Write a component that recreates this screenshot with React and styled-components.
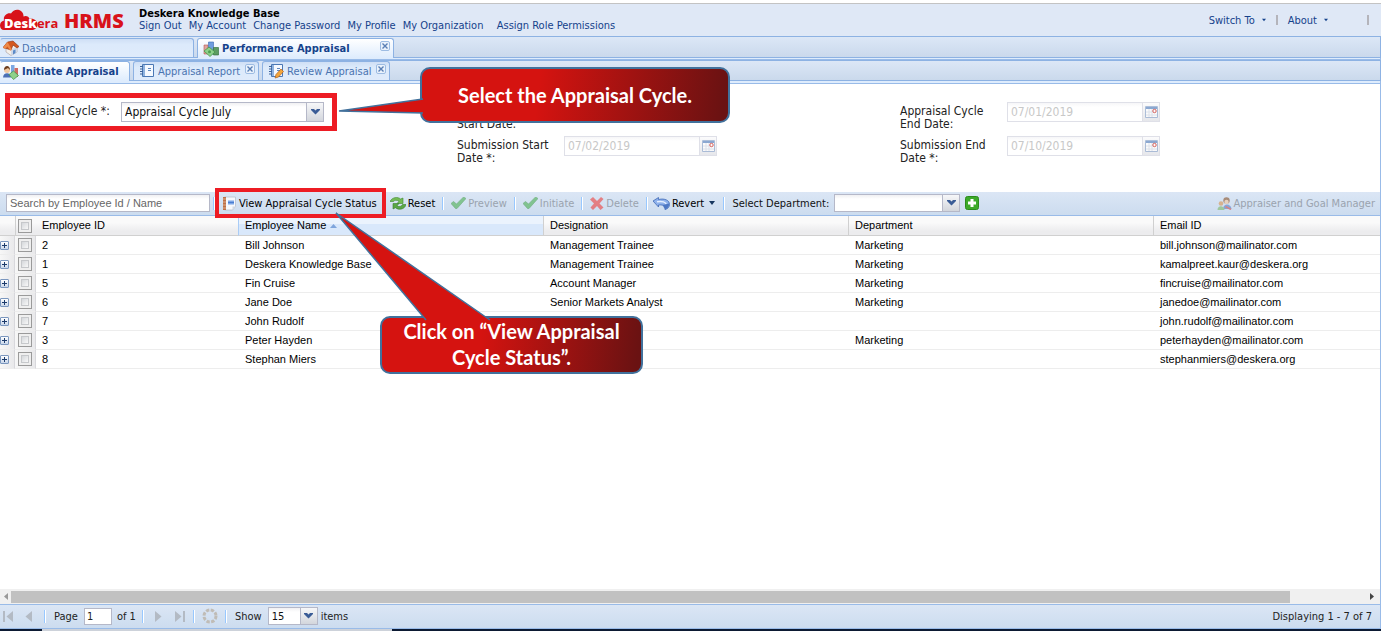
import React from "react";
import styled, { createGlobalStyle, css } from "styled-components";

const ui = `"DejaVu Sans Condensed", "DejaVu Sans", sans-serif`;
const arial = `"Liberation Sans", sans-serif`;

const GlobalStyle = createGlobalStyle`
  *, *::before, *::after { box-sizing: border-box; }
  body { margin: 0; background: #fff; font: 11px/13px ${ui}; color: #222; }
  button, input, select { font: inherit; color: inherit; margin: 0; }
  button { border: 0; background: none; padding: 0; cursor: pointer; white-space: nowrap; }
  button:disabled { cursor: default; }
  a { color: inherit; text-decoration: none; }
  svg { display: block; flex: none; }
`;

const Page = styled.div`
  position: relative;
  display: flex;
  flex-direction: column;
  min-height: 100vh;
  overflow: hidden;
`;

/* ---------- header ---------- */
const Header = styled.header`
  display: flex;
  align-items: center;
  height: 33px;
  margin-top: 3px;
  padding-right: 12px;
  border-top: 1px solid #c3c3c3;
  background: #dfe8f6;
  color: #15428b;
`;
const Logo = styled.a`
  position: relative;
  display: flex;
  align-items: center;
  width: 139px;
  height: 30px;
  color: #d8121a;
  font: 700 13px/20px "Open Sans", sans-serif;
`;
const LogoCloud = styled.svg`
  position: absolute;
  left: 0;
  top: 4px;
`;
const Brand = styled.span`
  position: relative;
  width: 59px;
  padding: 6px 0 0 4px;
  b { color: #fff; }
`;
const Product = styled.span`
  position: relative;
  padding: 2px 0 0 5px;
  font-size: 20px;
  font-weight: 800;
`;
const Account = styled.div`
  flex: 1;
  strong { display: block; color: #000; line-height: 12px; }
`;
const AccountLinks = styled.nav`
  display: flex;
  gap: 7px;
  line-height: 12px;
`;
const HeaderMenu = styled.div`
  display: flex;
  align-items: center;
  gap: 10px;
`;
const MenuButton = styled.button`
  display: flex;
  align-items: center;
  gap: 7px;
`;
const Bar = styled.i`
  width: 2px;
  height: 10px;
  background: #b4b4bb;
  margin-left: ${(p) => (p.$far ? 29 : 0)}px;
`;

/* ---------- tabs ---------- */
const TabStrip = styled.nav`
  display: flex;
  align-items: flex-end;
  gap: 3px;
  height: ${(p) => (p.$inner ? 21 : 22)}px;
  border: solid #8db2e3;
  border-width: 1px 1px 1px 0;
  background: linear-gradient(#dce7f6, #cad9ec);
`;
const StripBase = styled.div`
  height: ${(p) => p.$h}px;
  border: solid #99bbe8;
  border-width: 0 1px 1px 0;
  background: #deecfd;
`;
const Tab = styled.div`
  display: flex;
  align-items: center;
  gap: 3px;
  width: ${(p) => p.$w}px;
  height: ${(p) => (p.$active ? 20 : 19)}px;
  margin-bottom: ${(p) => (p.$active ? -1 : 0)}px;
  padding: 0 3px 0 ${(p) => p.$pad || 2}px;
  border: 1px solid #8db2e3;
  border-bottom: 0;
  border-left-color: ${(p) => (p.$first ? "transparent" : "#8db2e3")};
  border-radius: 3px 3px 0 0;
  background: ${(p) =>
    p.$active ? "linear-gradient(#fff, #deecfd)" : "linear-gradient(#cfdff5, #dceafb 30%, #dfebfb)"};
  color: ${(p) => (p.$active ? "#15428b" : "#4a73b0")};
  font-weight: ${(p) => (p.$active ? 700 : 400)};
`;
const TabLink = styled.a`
  flex: 1;
  white-space: nowrap;
`;
const CloseButton = styled.button`
  align-self: flex-start;
  margin-top: 2px;
  display: grid;
  place-items: center;
  width: 10px;
  height: 10px;
  border: 1px solid #9dbce3;
  border-radius: 2px;
  background: #eaf2fc;
`;

/* ---------- form ---------- */
const Form = styled.form`
  display: grid;
  grid-template-columns: repeat(3, 1fr);
  gap: 5px 0;
  padding: 18px 37px 17px 14px;
  height: 108px;
  align-content: start;
  border-right: 1px solid #99bbe8;
  font-size: 12px;
`;
const Field = styled.div`
  position: relative;
  display: flex;
  align-items: flex-start;
  justify-self: start;
  height: 29px;
  grid-column: ${(p) => p.$col};
`;
const FieldLabel = styled.label`
  width: 107px;
  padding: ${(p) => (p.$second ? 16 : 3)}px 8px 0 0;
`;
const Highlight = styled.i`
  position: absolute;
  inset: ${(p) => p.$inset};
  border: ${(p) => p.$b}px solid #ed1c24;
  pointer-events: none;
  z-index: 2;
`;
const Control = styled.div`
  display: flex;
  width: ${(p) => p.$w}px;
  height: ${(p) => p.$h || 20}px;
  border: 1px solid ${(p) => (p.$off ? "#dfe0e8" : "#b5b8c8")};
  background: ${(p) => (p.$off ? "linear-gradient(#f6f6f8, #fff 4px)" : "linear-gradient(#f0f0f2, #fff 4px)")};
`;
const TextInput = styled.input`
  flex: 1;
  min-width: 0;
  border: 0;
  padding: 0 3px;
  background: none;
  outline: 0;
  &:disabled { color: #c8c8c8; }
`;
const Select = styled.select`
  flex: 1;
  min-width: 0;
  padding: 0 3px;
  border: 0;
  appearance: none;
  background: none;
  outline: 0;
  color: #111;
`;
const Trigger = styled.button`
  display: grid;
  place-items: center;
  width: 17px;
  border-left: 1px solid #b5b8c8;
  background: linear-gradient(#f6f7f9, #d3d6dc);
  &:disabled {
    border-color: #dfe0e8;
    background: linear-gradient(#fbfbfc, #e6e7eb);
  }
  &:disabled svg { opacity: 0.7; }
`;

/* ---------- toolbar ---------- */
const Toolbar = styled.div`
  display: flex;
  align-items: center;
  height: 24px;
  padding: 0 5px 1px 6px;
  border: solid #99bbe8;
  border-width: 0 1px 1px 0;
  background: linear-gradient(#dbe6f5, #ccdcef);
  color: #111;
`;
const ToolButton = styled.button`
  position: relative;
  display: flex;
  align-items: center;
  gap: 2px;
  margin-left: ${(p) => p.$gap || 7}px;
  color: ${(p) => (p.disabled ? "#9aa3ae" : "#000")};
  svg { opacity: ${(p) => (p.disabled ? 0.6 : 1)}; }
`;
const Separator = styled.i`
  width: 2px;
  height: 13px;
  margin-left: ${(p) => p.$gap || 7}px;
  border-left: 1px solid #98c8ff;
  border-right: 1px solid #fff;
`;
const SearchInput = styled.input`
  width: 204px;
  height: 18px;
  padding: 0 3px;
  border: 1px solid #b5b8c8;
  background: linear-gradient(#f0f0f2, #fff 4px);
  font-family: ${arial};
  &::placeholder { color: #666; opacity: 1; }
`;
const ToolLabel = styled.label`
  margin: 0 5px 0 7px;
`;
const Spacer = styled.span`
  flex: 1;
`;

/* ---------- grid ---------- */
const GridBody = styled.main`
  flex: 1;
  border-right: 1px solid #99bbe8;
`;
const Table = styled.table`
  width: 100%;
  table-layout: fixed;
  border-collapse: separate;
  border-spacing: 0;
  font: 11px/13px ${arial};
  color: #000;
`;
const Th = styled.th`
  height: 20px;
  padding: 0 0 0 ${(p) => (p.$tight ? 2 : 6)}px;
  text-align: left;
  font-weight: 400;
  border-bottom: 1px solid #d0d0d0;
  border-left: ${(p) => (p.$first ? 0 : 1)}px solid ${(p) => (p.$sorted ? "#aaccf6" : "#d0d0d0")};
  background: ${(p) =>
    p.$sorted
      ? "linear-gradient(#ebf3fd 40%, #d9e8fb 42%)"
      : "linear-gradient(#fafafa 35%, #ececee 80%)"};
`;
const SortLabel = styled.span`
  display: flex;
  align-items: center;
  gap: 4px;
`;
const Td = styled.td`
  height: 19px;
  padding: 0 0 0 ${(p) => (p.$lead ? 6 : 7)}px;
  border-bottom: 1px solid #ededed;
  ${(p) =>
    p.$tool &&
    css`
      padding-left: ${p.$tool === "x" ? 0 : 3}px;
      border-right: 1px solid #d8d8dc;
      background: linear-gradient(90deg, #f7f7f7, #e9e9eb);
    `}
`;
const Check = styled.input`
  display: block;
  appearance: none;
  width: 14px;
  height: 14px;
  margin: 0;
  border: 1px solid #9a9a9a;
  background: linear-gradient(135deg, #c4c8cd, #fbfbfb 80%);
  box-shadow: inset 0 0 0 2px #efefef, inset 0 0 0 3px #c6c8cb;
`;
const Expander = styled.button`
  display: grid;
  place-items: center;
  width: 9px;
  height: 9px;
  border: 1px solid #7b97bf;
  border-radius: 1px;
  background: linear-gradient(#fff, #c8d6ea);
`;

const ScrollBar = styled.div`
  display: flex;
  align-items: center;
  height: 15px;
  border-right: 1px solid #99bbe8;
  background: #f0f0f0;
`;
const ScrollArrow = styled.button`
  display: grid;
  place-items: center;
  width: 11px;
  height: 13px;
  margin-right: ${(p) => p.$end || 0}px;
`;
const ScrollTrack = styled.div`
  flex: 1;
  padding-right: 76px;
  i { display: block; height: 12px; background: #c1c1c1; }
`;

const Paging = styled.footer`
  display: flex;
  align-items: center;
  height: 25px;
  padding: 0 8px 1px 3px;
  border: solid #99bbe8;
  border-width: 1px 1px 1px 0;
  background: linear-gradient(#dbe6f5, #ccdcef);
  color: #222;
`;
const PageButton = styled.button`
  width: ${(p) => p.$w || 10}px;
  margin-left: ${(p) => p.$gap || 0}px;
`;
const PageText = styled.label`
  margin: 0 ${(p) => (p.$r === undefined ? 6 : p.$r)}px 0 ${(p) => p.$l || 0}px;
`;
const PageInput = styled.input`
  width: 28px;
  height: 17px;
  padding: 0 2px;
  border: 1px solid #b5b8c8;
  background: #fff;
`;
const Taskbar = styled.div`
  display: flex;
  height: 2px;
  background: #0c1a33;
  i { width: 350px; margin-left: 42px; background: #cdd2da; }
`;

/* ---------- callouts ---------- */
const Callout = styled.aside`
  position: absolute;
  z-index: 5;
  left: ${(p) => p.$x}px;
  top: ${(p) => p.$y}px;
  width: ${(p) => p.$w}px;
  height: ${(p) => p.$h}px;
  display: flex;
  align-items: center;
  justify-content: center;
  padding-bottom: 1px;
  border: 2px solid #41719c;
  border-radius: 10px;
  background: linear-gradient(97deg, #d51310 38%, #6a1212 98%);
  color: #fff;
  font: 700 20px/26px Lato, "Open Sans", sans-serif;
  text-align: center;
  white-space: nowrap;
`;
const Tail = styled.svg`
  position: absolute;
  left: ${(p) => p.$x}px;
  top: ${(p) => p.$y}px;
`;

/* ---------- icons ---------- */
const Chevron = () => (
  <svg width="9" height="6" viewBox="0 0 9 6"><path d="M0 0h3l1.5 1.600L6 0h3v1L4.500 5.400 0 1z" fill="#3a5c96" /></svg>
);
const Caret = ({ w = 6, color = "#15428b" }) => (
  <svg width={w} height="4" viewBox="0 0 6 4"><path d="M0 0h6L3 4z" fill={color} /></svg>
);
const CalendarIcon = () => (
  <svg width="13" height="12" viewBox="0 0 13 12">
    <path d="M.5.5h12v11H.5z" fill="#fff" stroke="#8fa8cc" />
    <path d="M1 1h11v2H1z" fill="#5f88c2" />
    <path d="M4 3v8M7 3v8M1 6h8M1 9h11" stroke="#d5dce8" />
    <circle cx="9.500" cy="5" r="1.700" fill="#fff" stroke="#c8201a" />
  </svg>
);
const HomeIcon = () => (
  <svg width="16" height="16" viewBox="0 0 16 16">
    <path d="M3 8l5-4 6 3v5l-6 3.500L3 12z" fill="#f4f0ea" stroke="#a99" strokeWidth=".6" />
    <path d="M8 9.500l6-2.500v5l-6 3.500z" fill="#cfd9e8" />
    <path d="M0 7.500L4.500 2 10 1l6 5.500-2 1.500-4-3-2 5z" fill="#d4591f" stroke="#8d3210" strokeWidth=".6" />
    <path d="M0 7.500L4.500 2l4.500 8-2 .5-2.500-4L2 9z" fill="#ee8a48" />
    <path d="M10 10.500l2.500-1V13L10 14.500z" fill="#5b8bc9" />
  </svg>
);
const ChartIcon = () => (
  <svg width="16" height="16" viewBox="0 0 16 16">
    <path d="M1 4h4v9H1z" fill="#e0a39e" stroke="#b25850" strokeWidth=".6" />
    <path d="M5.500 1h5v12h-5z" fill="#6f9de0" stroke="#3b68b1" strokeWidth=".6" />
    <path d="M10.500 6.500h5v7.500h-5z" fill="#5d9c63" stroke="#2d6a35" strokeWidth=".6" />
    <path d="M1 10l5-4 6 5-5 4.500z" fill="#8ed18b" stroke="#3d9142" strokeWidth=".7" />
    <circle cx="6.500" cy="10.700" r="1.500" fill="#4da052" />
  </svg>
);
const AppraisalIcon = () => (
  <svg width="16" height="16" viewBox="0 0 16 16">
    <path d="M8 1h3.500v10H8z" fill="#7ba7e2" /><path d="M11.500 4H15v9h-3.500z" fill="#ce6a62" />
    <circle cx="4" cy="6" r="3" fill="#f1c69d" /><path d="M1 6c0-5 6-5.500 6 0L5 4z" fill="#6b3d1e" />
    <path d="M0 13.500c0-5 7.500-6 8 0z" fill="#4c70b5" />
    <path d="M6 10.500L10.500 7l5 4.500-5 4z" fill="#8ed18b" stroke="#3d9142" strokeWidth=".7" />
  </svg>
);
const NotebookIcon = ({ pencil }) => (
  <svg width="16" height="16" viewBox="0 0 16 16">
    <path d="M3.500 1.500h11v12h-11z" fill="#f5f9ff" stroke="#4b78b5" />
    <path d="M4 2h2v11H4z" fill="#8eb2df" />
    <path d="M1 3.500h3M1 6h3M1 8.500h3M1 11h3" stroke="#3d6299" />
    <path d="M9 5.500h3M9 7.500h3" stroke="#5d86bd" />
    {pencil && <path d="M7 15l1-3.500L13 6l2.500 2.500-5 5.500z" fill="#f3a63b" stroke="#b2601d" strokeWidth=".7" />}
  </svg>
);
const StatusIcon = () => (
  <svg width="15" height="15" viewBox="0 0 15 15">
    <path d="M2.500 1h11v9.500l-3 3.500h-8z" fill="#f6f8fc" stroke="#b8bfcb" strokeWidth=".8" />
    <path d="M1 1h3v13H1z" fill="#bd7048" /><path d="M1 3h3M1 6h3M1 9h3M1 12h3" stroke="#ecc7aa" strokeWidth=".7" />
    <path d="M6 4.500h6v4H6z" fill="#7ba5e6" /><path d="M6 6.500h6" stroke="#4a7dd0" />
    <path d="M13.500 10.500l-3 3.500v-3.500z" fill="#d2d7df" />
  </svg>
);
const ResetIcon = () => (
  <svg width="16" height="13" viewBox="0 0 16 13">
    <path d="M0 4.500C2 0 8-.5 10.500 2L13 1v5.500H7L9 4.300C7 2.800 4.500 3 3.500 4.500z" fill="#74bb55" stroke="#3e8a31" strokeWidth=".6" />
    <path d="M16 7.500C15 12.500 8.500 13.500 5.500 10.700L3 12V6.500h6L7 8.800c2 1.500 4.500.7 5.500-1.300z" fill="#5aa745" stroke="#37802d" strokeWidth=".6" />
  </svg>
);
const TickIcon = () => (
  <svg width="15" height="12" viewBox="0 0 15 12">
    <path d="M0 6.500L2.500 4.500 5.500 7 12.500 0 15 1.500 6 11.500H4.500z" fill="#4cb050" stroke="#2f8b36" strokeWidth=".6" />
  </svg>
);
const CrossIcon = () => (
  <svg width="14" height="13" viewBox="0 0 14 13">
    <path d="M0 2.500L3 0l4 4 4-4 2.500 2-4 4.500 4 4-3 2.500L7 9l-4 4-2.500-2.500 3.500-4z" fill="#ee3f3b" />
  </svg>
);
const RevertIcon = () => (
  <svg width="17" height="13" viewBox="0 0 17 13">
    <path d="M0 4L5.500.5v2C12 1 16.500 3.500 16.500 7.500c0 2.500-2 4.500-4.500 5 1.500-3-.5-5-6.500-4.500V10z" fill="#8fb2ec" stroke="#3f68b5" strokeWidth=".8" />
    <path d="M4 4.800C9 3.800 13 5 13.500 8" stroke="#e5efff" strokeWidth="1.500" fill="none" />
    <path d="M9.500 8l6.500-1.500c.5 2.500-1 5-4 6z" fill="#4e78c4" />
  </svg>
);
const PlusIcon = () => (
  <svg width="14" height="14" viewBox="0 0 14 14">
    <rect x=".5" y=".5" width="13" height="13" rx="2" fill="#3daa2a" stroke="#2b8c1c" />
    <path d="M5.500 3h3v2.500H11v3H8.500V11h-3V8.500H3v-3h2.500z" fill="#fff" />
  </svg>
);
const PeopleIcon = () => (
  <svg width="15" height="13" viewBox="0 0 15 13">
    <circle cx="9.500" cy="3.500" r="3.200" fill="#8a5228" /><circle cx="9.500" cy="5" r="2.200" fill="#f2c79c" />
    <path d="M6 12c0-6 8-6 8.500 0z" fill="#5680c4" />
    <circle cx="4" cy="6.500" r="2.300" fill="#d9944e" /><path d="M.5 13c0-5 6.500-5 7 0z" fill="#7fb868" />
    <path d="M8.500 9.500l5.500 3" stroke="#d7493f" strokeWidth="1.500" />
  </svg>
);
const PagerArrow = ({ bar, flip }) => (
  <svg width="10" height="11" viewBox="0 0 10 11">
    <g transform={flip ? "translate(10 0) scale(-1 1)" : undefined} fill="#b3bac4">
      {bar && <path d="M0 0h2v11H0z" />}
      <path d={bar ? "M10 0v11L3.500 5.500z" : "M8 0v11L1.500 5.500z"} />
    </g>
  </svg>
);
const RefreshIcon = () => (
  <svg width="16" height="16" viewBox="0 0 16 16">
    <circle cx="8" cy="8" r="6" fill="none" stroke="#c0bcb6" strokeWidth="3" strokeDasharray="3.300 1.412" />
  </svg>
);

const Close = ({ label }) => (
  <CloseButton aria-label={`Close ${label}`}>
    <svg width="6" height="6" viewBox="0 0 6 6"><path d="M.5.5l5 5M5.500.5l-5 5" stroke="#5a7fb5" strokeWidth="1.400" /></svg>
  </CloseButton>
);

const DateField = ({ id, label, value, col, second }) => (
  <Field $col={col}>
    <FieldLabel htmlFor={id} $second={second}>{label}</FieldLabel>
    <Control $w={153} $off>
      <TextInput id={id} defaultValue={value} disabled />
      <Trigger type="button" aria-label="Pick a date" disabled><CalendarIcon /></Trigger>
    </Control>
  </Field>
);

const employees = [
  ["2", "Bill Johnson", "Management Trainee", "Marketing", "bill.johnson@mailinator.com"],
  ["1", "Deskera Knowledge Base", "Management Trainee", "Marketing", "kamalpreet.kaur@deskera.org"],
  ["5", "Fin Cruise", "Account Manager", "Marketing", "fincruise@mailinator.com"],
  ["6", "Jane Doe", "Senior Markets Analyst", "Marketing", "janedoe@mailinator.com"],
  ["7", "John Rudolf", "", "", "john.rudolf@mailinator.com"],
  ["3", "Peter Hayden", "", "Marketing", "peterhayden@mailinator.com"],
  ["8", "Stephan Miers", "", "", "stephanmiers@deskera.org"],
];

export default function App() {
  return (
    <Page>
      <GlobalStyle />
      <Header>
        <Logo href="#">
          <LogoCloud width="38" height="22" viewBox="0 0 38 22">
            <path d="M4 21C1.500 21 0 19 0 16.500S1.500 12 4 11.500C3 7 7 3.500 11 4.500 13 .5 18-.5 21 2c2 1.500 2.500 3.500 2.500 5.500C26 6 29 7.500 29.500 10 34 9 37.500 12 37.500 15.500c0 3.500-3 5.500-6 5.500z" fill="#d8121a" />
          </LogoCloud>
          <Brand><b>Desk</b>era</Brand>
          <Product>HRMS</Product>
        </Logo>
        <Account>
          <strong>Deskera Knowledge Base</strong>
          <AccountLinks>
            <a href="#">Sign Out</a><a href="#">My Account</a><a href="#">Change Password</a>
            <a href="#">My Profile</a><a href="#">My Organization</a>
            <a href="#">&nbsp;&nbsp;Assign Role Permissions</a>
          </AccountLinks>
        </Account>
        <HeaderMenu>
          <MenuButton>Switch To <Caret w={4} /></MenuButton>
          <Bar />
          <MenuButton>About <Caret w={4} /></MenuButton>
          <Bar $far />
        </HeaderMenu>
      </Header>

      <TabStrip>
        <Tab $w={194} $first><HomeIcon /><TabLink href="#">Dashboard</TabLink></Tab>
        <Tab $w={197} $active $pad={5}><ChartIcon /><TabLink href="#">Performance Appraisal</TabLink><Close label="Performance Appraisal" /></Tab>
      </TabStrip>
      <StripBase $h={2} />
      <TabStrip $inner>
        <Tab $w={130} $active $first><AppraisalIcon /><TabLink href="#">Initiate Appraisal</TabLink></Tab>
        <Tab $w={126} $pad={5}><NotebookIcon /><TabLink href="#">Appraisal Report</TabLink><Close label="Appraisal Report" /></Tab>
        <Tab $w={128} $pad={5}><NotebookIcon pencil /><TabLink href="#">Review Appraisal</TabLink><Close label="Review Appraisal" /></Tab>
      </TabStrip>
      <StripBase $h={3} />

      <Form>
        <Field $col={1}>
          <FieldLabel htmlFor="cycle">Appraisal Cycle *:</FieldLabel>
          <Control $w={203}>
            <Select id="cycle"><option>Appraisal Cycle July</option></Select>
            <Trigger type="button" aria-label="Open appraisal cycles"><Chevron /></Trigger>
          </Control>
          <Highlight $inset="-9px -13px 0 -9px" $b={5} />
          <Callout $x={406} $y={-35} $w={310} $h={56}>
            <Tail $x={-84} $y={29} width="86" height="16" viewBox="0 0 86 16">
              <path d="M85 1L1 13l84 2" fill="#d51310" stroke="#41719c" strokeWidth="1.500" />
            </Tail>
            Select the Appraisal Cycle.
          </Callout>
        </Field>
        <DateField col={2} id="cs" label="Start Date:" value="" second />
        <DateField col={3} id="ce" label="Appraisal Cycle End Date:" value="07/01/2019" />
        <DateField col={2} id="ss" label="Submission Start Date *:" value="07/02/2019" />
        <DateField col={3} id="se" label="Submission End Date *:" value="07/10/2019" />
      </Form>

      <Toolbar>
        <SearchInput aria-label="Search employees" placeholder="Search by Employee Id / Name" />
        <Separator $gap={3} />
        <ToolButton>
          <StatusIcon />View Appraisal Cycle Status
          <Highlight $inset="-8px -9px -7px -7px" $b={4} />
          <Callout $x={158} $y={120} $w={263} $h={58}>
            <Tail $x={-48} $y={-107} width="158" height="110" viewBox="0 0 158 110">
              <path d="M92 109L2 2l154 107" fill="#d51310" stroke="#41719c" strokeWidth="1.500" />
            </Tail>
            Click on “View Appraisal<br />Cycle Status”.
          </Callout>
        </ToolButton>
        <ToolButton $gap={13}><ResetIcon />Reset</ToolButton>
        <Separator />
        <ToolButton disabled><TickIcon />Preview</ToolButton>
        <Separator />
        <ToolButton disabled><TickIcon />Initiate</ToolButton>
        <Separator />
        <ToolButton disabled><CrossIcon />Delete</ToolButton>
        <Separator />
        <ToolButton $gap={5}><RevertIcon />Revert&nbsp;<Caret color="#16365f" /></ToolButton>
        <Separator $gap={8} />
        <ToolLabel htmlFor="dept">Select Department:</ToolLabel>
        <Control $w={126} $h={18}>
          <Select id="dept"><option> </option></Select>
          <Trigger aria-label="Open departments"><Chevron /></Trigger>
        </Control>
        <ToolButton $gap={5} aria-label="Add department"><PlusIcon /></ToolButton>
        <Spacer />
        <ToolButton disabled><PeopleIcon />Appraiser and Goal Manager</ToolButton>
      </Toolbar>

      <GridBody>
        <Table>
          <colgroup>
            <col width="15" /><col width="21" /><col width="202" /><col width="305" />
            <col width="305" /><col width="305" /><col />
          </colgroup>
          <thead>
            <tr>
              <Th $first aria-label="Expand" />
              <Th $tight><Check type="checkbox" aria-label="Select all employees" /></Th>
              <Th $first>Employee ID</Th>
              <Th $sorted><SortLabel>Employee Name <svg width="7" height="4" viewBox="0 0 7 4"><path d="M0 4h7L3.500 0z" fill="#7fa5dc" /></svg></SortLabel></Th>
              <Th>Designation</Th>
              <Th>Department</Th>
              <Th>Email ID</Th>
            </tr>
          </thead>
          <tbody>
            {employees.map((row) => (
              <tr key={row[0]}>
                <Td $tool="x">
                  <Expander aria-label={`Expand ${row[1]}`}>
                    <svg width="7" height="7" viewBox="0 0 7 7"><path d="M3 1h1v2h2v1H4v2H3V4H1V3h2z" fill="#1b3a6b" /></svg>
                  </Expander>
                </Td>
                <Td $tool="c"><Check type="checkbox" aria-label={`Select ${row[1]}`} /></Td>
                {row.map((text, i) => <Td key={i} $lead={i === 0}>{text}</Td>)}
              </tr>
            ))}
          </tbody>
        </Table>
      </GridBody>

      <ScrollBar>
        <ScrollArrow aria-label="Scroll left"><svg width="4" height="7" viewBox="0 0 4 7"><path d="M4 0v7L0 3.500z" fill="#999" /></svg></ScrollArrow>
        <ScrollTrack><i /></ScrollTrack>
        <ScrollArrow $end={3} aria-label="Scroll right"><svg width="4" height="7" viewBox="0 0 4 7"><path d="M0 0v7l4-3.500z" fill="#444" /></svg></ScrollArrow>
      </ScrollBar>
      <Paging>
        <PageButton aria-label="First page"><PagerArrow bar /></PageButton>
        <PageButton aria-label="Previous page" $gap={11}><PagerArrow /></PageButton>
        <Separator $gap={10} />
        <PageText htmlFor="page" $l={8}>Page</PageText>
        <PageInput id="page" defaultValue="1" />
        <PageText as="span" $l={5} $r={0}>of 1</PageText>
        <Separator $gap={6} />
        <PageButton aria-label="Next page" $gap={9}><PagerArrow flip /></PageButton>
        <PageButton aria-label="Last page" $gap={12}><PagerArrow bar flip /></PageButton>
        <Separator $gap={8} />
        <PageButton aria-label="Refresh" $gap={7} $w={16}><RefreshIcon /></PageButton>
        <Separator />
        <PageText htmlFor="size" $l={8}>Show</PageText>
        <Control $w={50} $h={18}>
          <Select id="size"><option>15</option></Select>
          <Trigger aria-label="Open page sizes"><Chevron /></Trigger>
        </Control>
        <PageText as="span" $l={3}>items</PageText>
        <Spacer />
        <span>Displaying 1 - 7 of 7</span>
      </Paging>
      <Taskbar><i /></Taskbar>
    </Page>
  );
}
